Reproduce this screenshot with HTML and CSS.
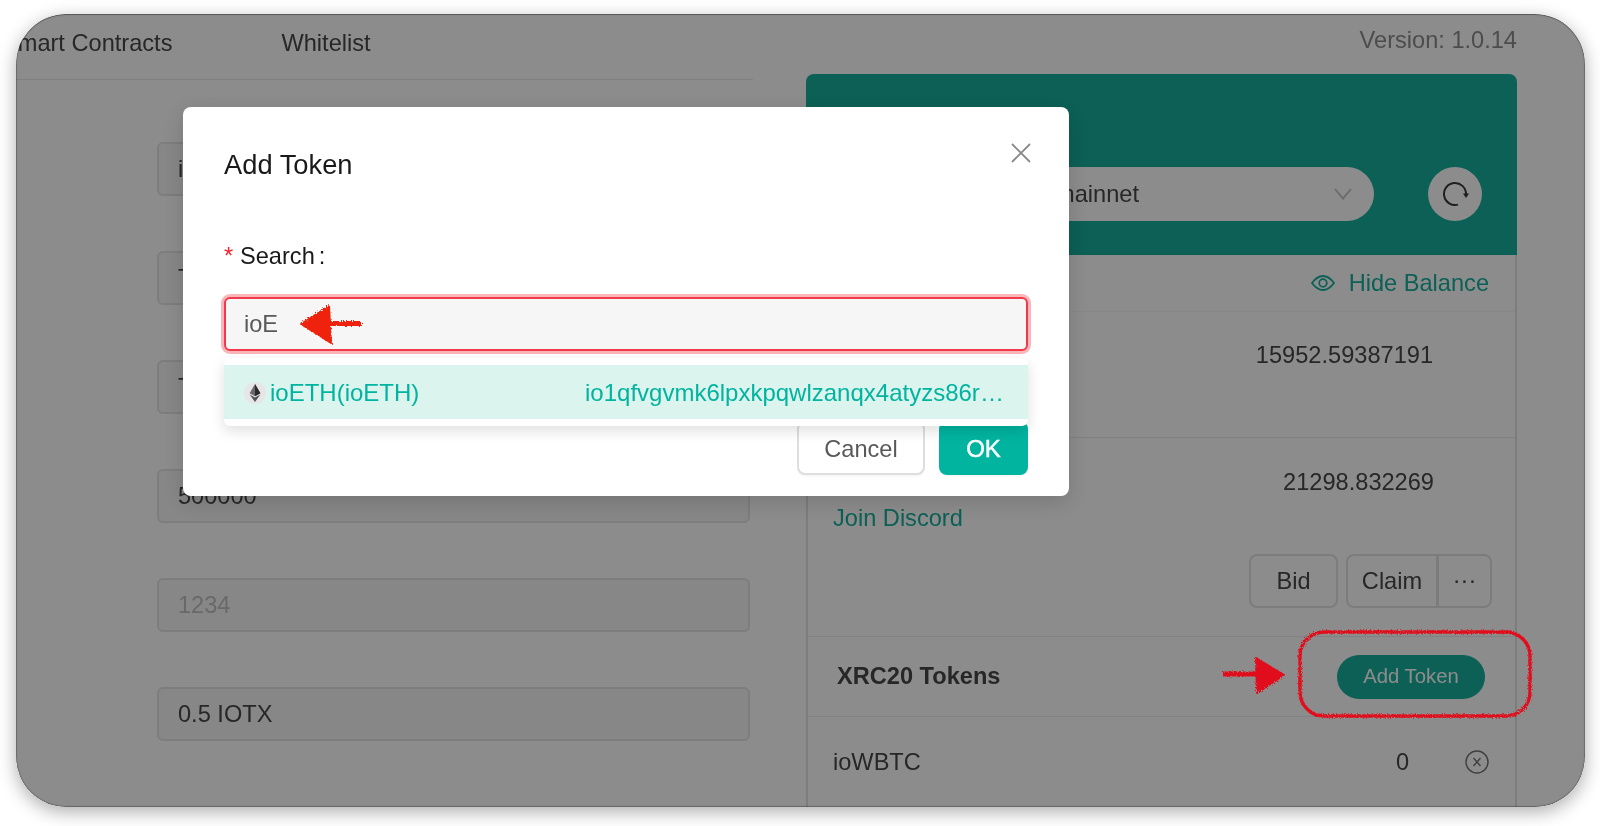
FILE: index.html
```html
<!DOCTYPE html>
<html lang="en">
<head>
<meta charset="utf-8">
<title>Add Token</title>
<link rel="stylesheet" href="styles.css">
</head>
<body>
<div class="window">
  <div class="page">
    <section class="left">
      <nav class="tabs"><span>Smart Contracts</span><span>Whitelist</span></nav>
      <div class="fields">
        <div class="field">io</div>
        <div class="field">T</div>
        <div class="field">T</div>
        <div class="field">500000</div>
        <div class="field placeholder">1234</div>
        <div class="field">0.5 IOTX</div>
      </div>
    </section>
    <section class="right">
      <div class="version">Version: 1.0.14</div>
      <div class="panel">
        <header class="panel-head">
          <div class="select"><span>mainnet</span>
            <svg class="chevron" width="20" height="12" viewBox="0 0 20 12"><path d="M2 1 L10 10.500 L18 1" fill="none" stroke="#c4c4c4" stroke-width="1.900"/></svg>
          </div>
          <div class="refresh">
            <svg width="28" height="28" viewBox="0 0 28 28"><path d="M25 14 A11 11 0 1 0 17 24.600" fill="none" stroke="#3a3a3a" stroke-width="2"/><path d="M22 13.500 L28 13.500 L25 18 Z" fill="#3a3a3a"/></svg>
          </div>
        </header>
        <div class="row row-hide">
          <svg width="24" height="16" viewBox="0 0 24 16"><path d="M1 8 C5 2.500 8.500 1 12 1 S19 2.500 23 8 C19 13.500 15.500 15 12 15 S5 13.500 1 8 Z" fill="none" stroke="#16b09c" stroke-width="1.800"/><circle cx="12" cy="8" r="3.800" fill="none" stroke="#16b09c" stroke-width="1.800"/></svg>
          <a class="link">Hide Balance</a>
        </div>
        <div class="row row-balance"><span>15952.59387191</span></div>
        <div class="row row-stake">
          <div class="amount">21298.832269</div>
          <a class="link discord">Join Discord</a>
          <div class="actions">
            <button class="btn bid">Bid</button>
            <div class="btn-group"><button class="btn claim">Claim</button><button class="btn more">···</button></div>
          </div>
        </div>
        <div class="row row-title"><strong>XRC20 Tokens</strong><button class="add-token">Add Token</button></div>
        <div class="row row-token">
          <span class="token-name">ioWBTC</span>
          <span class="token-amount">0</span>
          <svg class="token-remove" width="24" height="24" viewBox="0 0 24 24"><circle cx="12" cy="12" r="11" fill="none" stroke="#737373" stroke-width="1.400"/><path d="M8.500 8 L15.500 16 M15.500 8 L8.500 16" stroke="#737373" stroke-width="1.400"/></svg>
        </div>
      </div>
    </section>
  </div>
  <div class="overlay"></div>
</div>

<div class="modal">
  <h2 class="modal-title">Add Token</h2>
  <svg class="modal-close" width="20" height="20" viewBox="0 0 20 20"><path d="M1 1 L19 19 M19 1 L1 19" stroke="#8a8a8a" stroke-width="1.800"/></svg>
  <label class="modal-label"><span class="star">*</span>Search<span class="colon">:</span></label>
  <div class="search">ioE</div>
  <div class="dropdown">
    <div class="option">
      <span class="eth">
        <svg width="12" height="18" viewBox="0 0 12 20"><path d="M6 0 L12 10.200 L6 13.500 L0 10.200 Z" fill="#6a6a6c"/><path d="M6 0 L12 10.200 L6 13.500 Z" fill="#2a2a2a"/><path d="M0 11.600 L6 15 L12 11.600 L6 20 Z" fill="#555"/></svg>
      </span>
      <span class="option-name">ioETH(ioETH)</span>
      <span class="option-addr">io1qfvgvmk6lpxkpqwlzanqx4atyzs86ryqkfrm2c</span>
    </div>
  </div>
  <footer class="modal-foot">
    <button class="modal-btn cancel">Cancel</button>
    <button class="modal-btn ok">OK</button>
  </footer>
</div>

<svg class="annotations" width="1600" height="826" viewBox="0 0 1600 826">
  <defs>
    <filter id="rough" x="-10%" y="-10%" width="120%" height="120%">
      <feTurbulence type="fractalNoise" baseFrequency="0.8" numOctaves="2" seed="4"/>
      <feDisplacementMap in="SourceGraphic" scale="4"/>
    </filter>
  </defs>
  <g filter="url(#rough)">
    <path d="M362 323.500 L315 323.500" stroke="#ee2409" stroke-width="5" fill="none"/>
    <path d="M301 324 L329 306 L331 343 Z" fill="#ee2409" stroke="#ee2409" stroke-width="2" stroke-linejoin="round"/>
    <rect x="1300" y="632" width="230" height="84" rx="24" fill="none" stroke="#e2111d" stroke-width="3.400"/>
    <path d="M1223 674 L1262 674" stroke="#e2111d" stroke-width="5" fill="none"/>
    <path d="M1256 658 L1284 675 L1257 693 Z" fill="#e2111d" stroke="#e2111d" stroke-width="2" stroke-linejoin="round"/>
  </g>
</svg>
</body>
</html>
```
FILE: styles.css
```css
* { box-sizing: border-box; }
html, body { margin: 0; height: 100%; }
body {
  background: #fff;
  font-family: "Liberation Sans", Arial, sans-serif;
  font-size: 23.6px;
  color: #484848;
  overflow: hidden;
}
button { font-family: inherit; font-size: inherit; color: inherit; cursor: pointer; }

.window {
  position: relative;
  margin: 14px 15px 0 16px;
  height: 793px;
  border-radius: 50px;
  overflow: hidden;
  background: #fff;
  filter: blur(.45px);
}
body::before {
  content: "";
  position: absolute;
  left: 16px;
  top: 14px;
  width: 1569px;
  height: 793px;
  border-radius: 50px;
  box-shadow: 0 5px 18px rgba(0, 0, 0, .32);
}
.page { display: grid; grid-template-columns: 737px 711px; column-gap: 53px; height: 100%; }
.overlay {
  position: absolute;
  inset: 0;
  border-radius: 50px;
  background: rgba(0, 0, 0, .45);
  box-shadow: inset 0 1px 1px rgba(0, 0, 0, .35), inset 1px 0 1px rgba(0, 0, 0, .18), inset -1px 0 1px rgba(0, 0, 0, .18), inset 0 -1px 1px rgba(0, 0, 0, .25);
}

.tabs {
  display: flex;
  gap: 109px;
  height: 66px;
  margin-left: -14px;
  padding-top: 15px;
  line-height: 28px;
  border-bottom: 1px solid #eaeaea;
  white-space: nowrap;
}
.fields { display: flex; flex-direction: column; gap: 55px; margin: 62px 3px 0 141px; }
.field {
  height: 54px;
  padding: 0 19px;
  line-height: 50px;
  border: 2px solid #e4e4e4;
  border-radius: 6px;
  background: #f6f6f6;
}
.placeholder { color: #bfbfbf; }

.right { display: flex; flex-direction: column; min-height: 0; }
.version { flex: none; height: 60px; padding-top: 12px; line-height: 28px; text-align: right; color: #8c8c8c; }
.panel {
  flex: 1;
  min-height: 0;
  border-left: 2px solid #e2e2e2;
  border-right: 2px solid #e2e2e2;
  border-radius: 8px 8px 0 0;
}
.panel-head {
  height: 181px;
  margin: 0 -2px;
  display: flex;
  justify-content: flex-end;
  align-items: flex-end;
  gap: 54px;
  padding: 0 35px 34px 0;
  background: #16b09c;
  border-radius: 8px 8px 0 0;
}
.select {
  width: 450px;
  height: 54px;
  padding: 0 21px 0 0;
  display: flex;
  align-items: center;
  justify-content: flex-end;
  gap: 194px;
  border-radius: 27px;
  background: #fff;
}
.select span { line-height: 28px; }
.refresh {
  width: 54px;
  height: 54px;
  display: flex;
  align-items: center;
  justify-content: center;
  border-radius: 50%;
  background: #fff;
}
.row { border-bottom: 1px solid #ececec; }
.row-hide {
  height: 57px;
  display: flex;
  align-items: center;
  justify-content: flex-end;
  gap: 14px;
  padding-right: 26px;
  border-bottom-color: #f6f6f6;
}
.link { color: #16b09c; }
.row-balance { height: 126px; padding: 29px 82px 0 0; line-height: 28px; text-align: right; }
.row-stake { height: 199px; padding: 30px 23px 0 25px; line-height: 28px; }
.amount { text-align: right; padding-right: 58px; }
.discord { display: block; margin-top: 8px; }
.actions { display: flex; justify-content: flex-end; gap: 8px; margin-top: 22px; }
.btn { height: 54px; padding: 0; background: #fff; border: 2px solid #e2e2e2; border-radius: 8px; }
.bid { width: 89px; }
.btn-group { display: flex; }
.claim { width: 92px; border-radius: 8px 0 0 8px; }
.more { width: 55px; margin-left: -1px; border-radius: 0 8px 8px 0; line-height: 1; }
.row-title { height: 80px; display: flex; align-items: center; justify-content: space-between; padding: 0 30px 0 29px; }
.add-token {
  width: 148px;
  height: 44px;
  padding: 0;
  border: 0;
  border-radius: 22px;
  background: #16b09c;
  color: #fff;
  font-size: 20.300px;
}
.row-token { display: flex; align-items: center; height: 90px; padding: 0 26px 0 25px; border: 0; }
.token-name { flex: 1; }
.token-remove { margin-left: 56px; }

.modal {
  position: absolute;
  left: 183px;
  top: 107px;
  width: 886px;
  height: 389px;
  padding: 41px 41px 20px 41px;
  background: #fff;
  border-radius: 8px;
  box-shadow: 0 6px 20px rgba(0, 0, 0, .14);
  filter: blur(.35px);
  color: #1a1a1a;
}
.modal-title { margin: 0; height: 34px; font-size: 27.300px; font-weight: 400; line-height: 34px; }
.modal-close { position: absolute; left: 828px; top: 36px; }
.modal-label { display: block; margin-top: 60px; line-height: 28px; white-space: nowrap; }
.star { display: inline-block; width: 16px; color: #f5222d; }
.colon { margin-left: 4px; }
.search {
  margin-top: 27px;
  height: 54px;
  padding-left: 18px;
  line-height: 50px;
  color: #595959;
  background: #f6f6f6;
  border: 2px solid #f0394a;
  border-radius: 6px;
  box-shadow: 0 0 0 3px rgba(245, 34, 45, .33);
}
.dropdown {
  position: absolute;
  left: 41px;
  top: 251px;
  width: 804px;
  height: 68px;
  padding: 7px 0;
  background: #fff;
  border-radius: 6px;
  box-shadow: 0 5px 14px rgba(0, 0, 0, .13);
  z-index: 2;
  font-size: 24px;
}
.option { height: 54px; display: flex; align-items: center; padding: 1px 24px 0 20px; background: #dcf4ee; color: #00b4a0; white-space: nowrap; }
.eth { width: 22px; height: 22px; margin-right: 4px; display: flex; align-items: center; justify-content: center; border-radius: 50%; background: #e6e6e6; flex: none; }
.option-name { width: 315px; flex: none; }
.option-addr { flex: 1; min-width: 0; overflow: hidden; text-overflow: ellipsis; }
.modal-foot { display: flex; justify-content: flex-end; gap: 14px; margin-top: 70px; }
.modal-btn { height: 54px; padding: 2px 0 0; border-radius: 8px; box-shadow: 0 2px 1px rgba(0, 0, 0, .03); }
.cancel { width: 128px; background: #fff; border: 2px solid #dedede; color: #595959; }
.ok { width: 89px; background: #00b4a0; border: 0; color: #fff; -webkit-text-stroke: .4px #fff; font-size: 24px; }

.annotations { position: absolute; left: 0; top: 0; pointer-events: none; filter: blur(.4px); }
```
